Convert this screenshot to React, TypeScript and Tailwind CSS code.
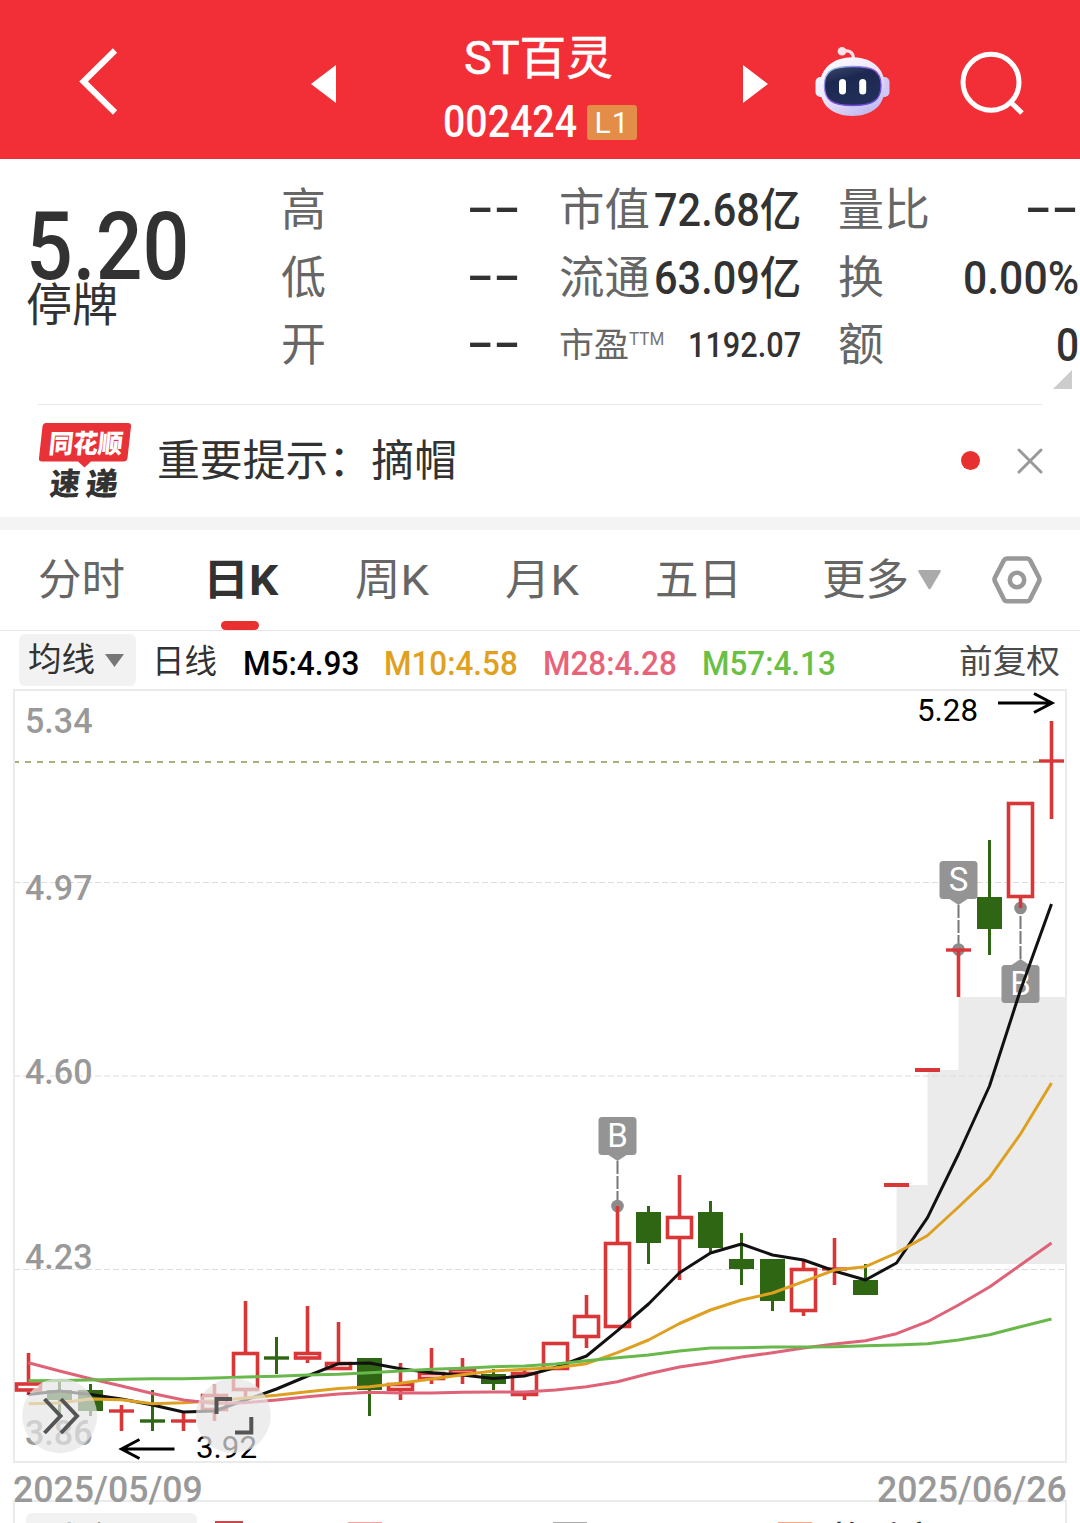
import { useLayoutEffect, useRef, useState, type ReactNode } from 'react';

/** Single-line text condensed or widened to fill the width of its box. */
function Fit({ className = '', children }: { className?: string; children: ReactNode }) {
  const box = useRef<HTMLDivElement>(null);
  const text = useRef<HTMLSpanElement>(null);
  const [ratio, setRatio] = useState(1);
  useLayoutEffect(() => {
    if (box.current && text.current) setRatio(box.current.clientWidth / text.current.offsetWidth);
  }, [children]);
  return (
    <div ref={box} className={`shrink-0 ${className}`}>
      <span ref={text} className="inline-block origin-left whitespace-nowrap" style={{ transform: `scaleX(${ratio})` }}>
        {children}
      </span>
    </div>
  );
}

function Robot() {
  return (
    <svg className="ml-[47px] h-[72px] w-[76px] shrink-0" viewBox="815 46 76 72">
      <defs>
        <linearGradient id="shell" x1="0" y1="0" x2="0.6" y2="1">
          <stop offset="0" stopColor="#fff" />
          <stop offset="0.55" stopColor="#ece6fb" />
          <stop offset="1" stopColor="#c3bdf0" />
        </linearGradient>
        <linearGradient id="rim" x1="0" y1="0" x2="1" y2="1">
          <stop offset="0" stopColor="#9adcf5" />
          <stop offset="0.5" stopColor="#8a4be0" />
          <stop offset="1" stopColor="#5b4fe0" />
        </linearGradient>
        <linearGradient id="visor" x1="0" y1="0" x2="0.4" y2="1">
          <stop offset="0" stopColor="#3d4a6e" />
          <stop offset="0.4" stopColor="#1c2850" />
          <stop offset="1" stopColor="#222f58" />
        </linearGradient>
      </defs>
      <rect x="815.500" y="77" width="12" height="20" rx="5" fill="#f2effd" />
      <rect x="877.500" y="77" width="12" height="20" rx="5" fill="#cfc9f5" />
      <path d="M843 51.500c7-2 10.500 1.500 10.500 8" fill="none" stroke="#f9dfe8" strokeWidth="3.200" />
      <circle cx="842" cy="51.300" r="4.300" fill="#fbe3ea" />
      <path d="M852.500 57.300c19 0 32.500 11 32.500 29 0 20-13.500 29.700-32.500 29.700s-32.700-9.700-32.700-29.700c0-18 13.700-29 32.700-29z" fill="url(#shell)" />
      <path d="M852.700 66.500c20 0 28.300 4 28.300 19s-8.300 20-28.300 20-28.300-5-28.300-20 8.300-19 28.300-19z" fill="url(#visor)" stroke="url(#rim)" strokeWidth="1.300" />
      <rect x="839" y="79" width="7" height="15.500" rx="3.500" fill="#fff" />
      <rect x="859.200" y="79" width="7" height="15.500" rx="3.500" fill="#fff" />
    </svg>
  );
}

function Header() {
  return (
    <header className="flex h-[159px] items-start bg-[#f22f37] pt-[46px] text-white">
      <svg className="ml-[76px] h-[72px] w-[44px] shrink-0" viewBox="76 46 44 72">
        <path d="M115 50.500 83.500 81.500 115 112.500" fill="none" stroke="#fff" strokeWidth="6" />
      </svg>
      <svg className="mt-[19px] ml-[191px] h-[38px] w-[25px] shrink-0" viewBox="0 0 25 38">
        <path d="M0 19 25 0v38z" fill="#fff" />
      </svg>
      <div className="-mt-[15px] ml-[107px] flex w-[194px] flex-col">
        <Fit className="ml-[21px] h-[55px] w-[149px] text-[46px] leading-[54px]">
          <span className="[-webkit-text-stroke:0.6px_white]">ST百灵</span>
        </Fit>
        <div className="mt-[9px] flex h-[54px] items-center">
          <Fit className="w-[134px] text-[44px] leading-[54px] font-medium">002424</Fit>
          <div className="ml-[10px] flex h-[35px] w-[50px] items-center justify-center rounded-[3px] bg-[#e38d48]">
            <span className="text-[30px] leading-[33px] tracking-[1px]">L1</span>
          </div>
        </div>
      </div>
      <svg className="mt-[19px] ml-[106px] h-[38px] w-[25px] shrink-0" viewBox="0 0 25 38">
        <path d="M25 19 0 0v38z" fill="#fff" />
      </svg>
      <Robot />
      <svg className="ml-[66px] h-[72px] w-[72px] shrink-0" viewBox="957 46 72 72">
        <circle cx="991" cy="82.300" r="28" fill="none" stroke="#fff" strokeWidth="5" />
        <path d="m1010.500 102 11.500 11" stroke="#fff" strokeWidth="5" />
      </svg>
    </header>
  );
}

const label = 'text-[#666] leading-[67px]';
const value = 'text-[#323232] font-medium leading-[67px]';
const dashes = 'text-[#323232] font-medium leading-[63px]';

function Quote() {
  return (
    <section className="relative flex h-[245px] pt-[18px]">
      <div className="w-[281px] pl-[26px] text-[#323232]">
        <Fit className="mt-[24px] h-[81px] w-[163px] text-[94px] leading-[92px] font-medium">5.20</Fit>
        <Fit className="w-[92px] text-[46px] leading-[46px]">停牌</Fit>
      </div>
      <div className="w-[239px]">
        {['高', '低', '开'].map((name) => (
          <div key={name} className="flex h-[67.500px] justify-between">
            <Fit className={`w-[45px] text-[45px] ${label}`}>{name}</Fit>
            <Fit className={`w-[53px] text-[46px] ${dashes}`}>--</Fit>
          </div>
        ))}
      </div>
      <div className="ml-[39px] w-[242px]">
        <div className="flex h-[67.500px] justify-between">
          <Fit className={`w-[91px] text-[45px] ${label}`}>市值</Fit>
          <Fit className={`w-[147px] text-[46px] ${value}`}>72.68亿</Fit>
        </div>
        <div className="flex h-[67.500px] justify-between">
          <Fit className={`w-[91px] text-[45px] ${label}`}>流通</Fit>
          <Fit className={`w-[147px] text-[46px] ${value}`}>63.09亿</Fit>
        </div>
        <div className="flex h-[67.500px]">
          <Fit className={`w-[70px] text-[34.500px] ${label}`}>市盈</Fit>
          <Fit className="mt-[12px] h-[30px] w-[35px] text-[18.500px] leading-[30px] text-[#777]">TTM</Fit>
          <Fit className={`ml-auto w-[113px] text-[35px] ${value}`}>1192.07</Fit>
        </div>
      </div>
      <div className="ml-[38px] w-[240px]">
        <div className="flex h-[67.500px] justify-between">
          <Fit className={`-ml-[1px] w-[92px] text-[45px] ${label}`}>量比</Fit>
          <Fit className={`mr-[1px] w-[53px] text-[46px] ${dashes}`}>--</Fit>
        </div>
        <div className="flex h-[67.500px] justify-between">
          <Fit className={`-ml-[1px] w-[46px] text-[45px] ${label}`}>换</Fit>
          <Fit className={`w-[116px] text-[46px] ${value}`}>0.00%</Fit>
        </div>
        <div className="flex h-[67.500px] justify-between">
          <Fit className={`-ml-[1px] w-[46px] text-[45px] ${label}`}>额</Fit>
          <Fit className={`w-[23px] text-[46px] ${value}`}>0</Fit>
        </div>
      </div>
      <svg className="absolute top-[211px] right-[8px] h-[19px] w-[19px]" viewBox="0 0 19 19">
        <path d="M19 0v19H0z" fill="#ccc" />
      </svg>
    </section>
  );
}

function Notice() {
  return (
    <section className="mx-[38px] flex h-[113px] items-center border-t border-[#e8e8e8]">
      <svg className="-mt-[2px] h-[84px] w-[94px] shrink-0" viewBox="38 418 94 84">
        <path d="M46 423h82q3.500 0 3 3.500l-3.500 31.500q-.5 3.500-4 3.500H91l-6.500 6-6.500-6H42q-3.500 0-3-3.500l3.500-31.500q.5-3.500 3.500-3.500z" fill="#e83237" />
        <text x="95.500" y="453" transform="skewX(-6)" className="text-[26px] font-black" fill="#fff" textLength="74" lengthAdjust="spacingAndGlyphs">同花顺</text>
        <text x="101" y="495" transform="skewX(-6)" className="text-[31px] font-black" fill="#333" textLength="30" lengthAdjust="spacingAndGlyphs">速</text>
        <text x="137" y="495" transform="skewX(-6)" className="text-[31px] font-black" fill="#333" textLength="32" lengthAdjust="spacingAndGlyphs">递</text>
      </svg>
      <Fit className="ml-[25px] w-[300px] text-[43px] leading-[60px] text-[#323232]">重要提示：摘帽</Fit>
      <div className="-mt-[1px] ml-auto h-[19px] w-[19px] rounded-full bg-[#e93030]" />
      <svg className="-mt-[1px] -mr-[1px] ml-[37px] h-[26px] w-[26px]" viewBox="0 0 26 26">
        <path d="M2 2 24 24M24 2 2 24" stroke="#999" strokeWidth="3" strokeLinecap="round" />
      </svg>
    </section>
  );
}

function Tabs() {
  return (
    <nav className="flex h-[101px] items-center border-b border-[#e6e6e6] text-[43px] leading-[60px] text-[#666]">
      <Fit className="ml-[38px] w-[87px]">分时</Fit>
      <div className="relative ml-[78px] flex h-full items-center font-bold text-[#323232]">
        <Fit className="w-[75px]">日K</Fit>
        <div className="absolute bottom-0 left-[18px] h-[9px] w-[38px] rounded-full bg-[#e93030]" />
      </div>
      <Fit className="ml-[77px] w-[74px]">周K</Fit>
      <Fit className="ml-[76px] w-[74px]">月K</Fit>
      <Fit className="ml-[76px] w-[87px]">五日</Fit>
      <Fit className="ml-[80px] w-[87px]">更多</Fit>
      <svg className="ml-[9px] h-[20px] w-[23px] shrink-0" viewBox="0 0 23 20">
        <path d="M1.500 0h20q2 0 1 2L13 18q-1.500 2.500-3 0L.5 2q-1-2 1-2z" fill="#aaa" />
      </svg>
      <svg className="ml-[49px] h-[52px] w-[54px] shrink-0" viewBox="990 554 54 52" fill="none" stroke="#999">
        <path d="M1007 558.500h20q2 0 3 1.700l9 17.300q1 2 0 4l-9 18q-1 1.800-3 1.800h-20q-2 0-3-1.800l-9-18q-1-2 0-4l9-17.300q1-1.700 3-1.700z" strokeWidth="4.600" />
        <circle cx="1017" cy="580" r="7.200" strokeWidth="4.600" />
      </svg>
    </nav>
  );
}

function Averages() {
  return (
    <div className="flex h-[57px] items-start pt-[3px] text-[34px] leading-[56px] font-medium">
      <div className="ml-[19px] flex h-[52px] w-[117px] items-center rounded-[6px] bg-[#f2f2f2] pl-[9px] font-normal text-[#323232]">
        <Fit className="w-[67px] text-[33px]">均线</Fit>
        <svg className="ml-[10px] h-[13px] w-[19px]" viewBox="0 0 19 13">
          <path d="M0 0h19L9.500 13z" fill="#777" />
        </svg>
      </div>
      <Fit className="ml-[16px] w-[65px] text-[33px] font-normal text-[#323232]">日线</Fit>
      <Fit className="mt-[1px] ml-[26px] w-[116px] text-black">M5:4.93</Fit>
      <Fit className="mt-[1px] ml-[25px] w-[134px] text-[#e0a020]">M10:4.58</Fit>
      <Fit className="mt-[1px] ml-[25px] w-[134px] text-[#e8637a]">M28:4.28</Fit>
      <Fit className="mt-[1px] ml-[25px] w-[134px] text-[#6abf45]">M57:4.13</Fit>
      <Fit className="mr-[20px] ml-auto w-[101px] text-[33px] font-normal text-[#4a4a4a]">前复权</Fit>
    </div>
  );
}

type Candle = { up: boolean; wick?: [number, number]; body: [number, number] };
const r = (body: [number, number], wick?: [number, number]): Candle => ({ up: true, body, wick });
const g = (body: [number, number], wick?: [number, number]): Candle => ({ up: false, body, wick });

const candles: Candle[] = [
  r([1382.5, 1391.5], [1353, 1395]), g([1390, 1400], [1379, 1413]), g([1390, 1411], [1384, 1416]),
  r([1411, 1411], [1405, 1431]), g([1421, 1421], [1390, 1431]), r([1421, 1421], [1412, 1431]),
  r([1394, 1411], [1384, 1421]), r([1352, 1391], [1301, 1397]), g([1358, 1358], [1337, 1374]),
  r([1352, 1359.5], [1306, 1363]), r([1362, 1370], [1322, 1370]), g([1358, 1390], [1358, 1416]),
  r([1383, 1391], [1363, 1400]), r([1372, 1380], [1348, 1384]), r([1368, 1375], [1358, 1384]),
  g([1374, 1384], [1369, 1390]), r([1372, 1396], [1370, 1400]), r([1342, 1370]),
  r([1315, 1338], [1295, 1348]), r([1242, 1328], [1206, 1242]), g([1212, 1243], [1206, 1264]),
  r([1216, 1239], [1175, 1280]), g([1212, 1248], [1201, 1252]), g([1259, 1269], [1233, 1285]),
  g([1259, 1301], [1259, 1311]), r([1268, 1312], [1261, 1316]), r([1269, 1269], [1238, 1285]),
  g([1280, 1295], [1264, 1280]), r([1185, 1185]), r([1070, 1070]), r([950, 950], [950, 997]),
  g([897, 929], [840, 955]), r([802, 898], [898, 908]), r([761, 761], [721, 819]),
];

const m5 = [1394.5, 1391, 1394.5, 1399, 1405, 1412, 1411, 1400, 1389, 1376, 1363.7, 1363, 1368.7, 1372.7, 1375, 1378.5, 1376, 1367.5, 1356, 1330.7, 1304, 1272.7, 1253, 1244, 1255, 1260, 1271, 1280, 1263, 1217.7, 1154, 1086, 990, 904];
const m10 = [1403.7, 1403, 1399, 1399.7, 1403.7, 1402.7, 1400.7, 1398, 1395.3, 1391.7, 1388.5, 1386.7, 1383.3, 1379, 1374.7, 1371, 1369.3, 1367.7, 1363.7, 1352.7, 1340, 1323.5, 1310, 1300, 1293, 1281.7, 1270, 1266.7, 1253, 1235.5, 1207, 1177.7, 1134, 1083];
const m28 = [1362.7, 1371, 1378.7, 1386, 1393.5, 1400, 1403.5, 1402.7, 1400, 1396.7, 1394, 1392.3, 1393, 1393, 1392.3, 1392, 1392, 1390, 1386.7, 1381.7, 1373.7, 1367, 1362.5, 1357, 1352.7, 1348, 1344, 1340.7, 1333.7, 1321.7, 1305, 1287, 1265, 1243];
const m57 = [1380.7, 1380.5, 1380, 1379.3, 1378.7, 1378.7, 1378, 1377, 1376.3, 1375, 1374.3, 1372.7, 1371, 1369.3, 1368.3, 1366.7, 1366, 1364, 1360.7, 1357.7, 1355, 1351, 1348, 1347.7, 1347, 1347, 1346.7, 1345.7, 1345, 1343.7, 1340, 1334.7, 1326.7, 1319];

const xAt = (i: number) => 28.5 + 31 * i;
const line = (ys: number[]) => ys.map((y, i) => `${xAt(i)},${y}`).join(' ');

function CandleMark({ c, x }: { c: Candle; x: number }) {
  const color = c.up ? '#d93638' : '#2f6614';
  const [top, bottom] = c.body;
  const flat = top === bottom;
  const hollow = c.up && !flat;
  return (
    <g stroke={color} strokeWidth={c.up ? 3.6 : 3}>
      {c.wick && (!hollow || c.wick[0] < top) && <path d={`M${x} ${c.wick[0]}V${hollow ? top : c.wick[1]}`} />}
      {c.wick && hollow && c.wick[1] > bottom && <path d={`M${x} ${bottom}V${c.wick[1]}`} />}
      {flat && <path d={`M${x - 12.5} ${top}h25`} strokeWidth={c.wick ? 3.4 : 4} />}
      {hollow && <rect x={x - 12} y={top + 1.5} width="24" height={bottom - top - 3} fill="none" />}
      {!flat && !c.up && <rect x={x - 12.5} y={top} width="25" height={bottom - top} fill={color} stroke="none" />}
    </g>
  );
}

function Marker({ x, box, dot, tip, name }: { x: number; box: number; dot: number; tip: number; name: string }) {
  const below = box > dot;
  const base = below ? box : box + 38;
  return (
    <g>
      <path d={`M${x} ${tip}V${dot}`} stroke="#777" strokeWidth="2" strokeDasharray="13 2" />
      <circle cx={x} cy={dot} r="6.300" fill="#8c8c8c" />
      <rect x={x - 19} y={box} width="38" height="38" rx="3.500" fill="#949494" />
      <path d={`M${x - 9} ${base}L${x} ${tip}L${x + 9} ${base}z`} fill="#949494" />
      <text x={x} y={box + 30} textAnchor="middle" fill="#fff" className="text-[33px]">{name}</text>
    </g>
  );
}

const axis: [string, number][] = [['5.34', 733], ['4.97', 900], ['4.60', 1084], ['4.23', 1269], ['3.86', 1445]];

function Chart() {
  return (
    <svg className="block h-[776px] w-[1080px]" viewBox="0 688 1080 776" fill="none">
      <path d="M896.500 1264V1185h31V1070h31V997H1066V1264z" fill="#ebebeb" />
      <path d="M14 882.500H1066M14 1076H1066M14 1269.500H1066" stroke="#dcdcdc" strokeWidth="1" strokeDasharray="6 3" />
      <path d="M13 762H1040" stroke="#aab078" strokeWidth="2" strokeDasharray="6 6" />
      <rect x="14" y="690" width="1052" height="772" stroke="#ebebeb" strokeWidth="2" />
      {axis.map(([t, y]) => (
        <text key={t} x="25" y={y} fill="#999" className="text-[35px] font-medium" textLength="67.500" lengthAdjust="spacingAndGlyphs">{t}</text>
      ))}
      <Marker x={617.5} box={1117} dot={1206} tip={1161} name="B" />
      <Marker x={958.5} box={861} dot={949.5} tip={905} name="S" />
      <Marker x={1020.5} box={965} dot={908} tip={959} name="B" />
      {candles.map((c, i) => <CandleMark key={i} c={c} x={xAt(i)} />)}
      <g strokeWidth="3" strokeLinejoin="round">
        <polyline points={line(m5)} stroke="#111" />
        <polyline points={line(m10)} stroke="#dda020" />
        <polyline points={line(m28)} stroke="#de6378" />
        <polyline points={line(m57)} stroke="#69b84c" />
      </g>
      <g stroke="#000" strokeWidth="3">
        <path d="M998 703H1052M1034 693.500 1052 703 1034 712.500" />
        <path d="M174.500 1449H121M139.500 1439.500 121.500 1449 139.500 1458.500" />
      </g>
      <g fill="#000" className="text-[32px]">
        <text x="917" y="721" textLength="61" lengthAdjust="spacingAndGlyphs">5.28</text>
        <text x="196" y="1458" textLength="61" lengthAdjust="spacingAndGlyphs">3.92</text>
      </g>
      <g fill="#e6e6e6" fillOpacity="0.7">
        <circle cx="59.700" cy="1415.700" r="37.500" />
        <circle cx="233.300" cy="1415.700" r="37.500" />
      </g>
      <g stroke="#555" strokeWidth="4">
        <path d="M44.500 1399 60.500 1416 44.500 1433M61 1399 77 1416 61 1433" />
        <path d="M216.500 1414V1399H232M251.300 1417V1432.500H235" />
      </g>
    </svg>
  );
}

function VolumePanel() {
  return (
    <div className="mx-[13px] flex h-[23px] items-start overflow-hidden border-x-2 border-t-2 border-[#ebebeb]">
      <div className="mt-[11px] ml-[11px] h-[52px] w-[171px] shrink-0 rounded-[6px] bg-[#f2f2f2] pl-[24px] text-[#323232]">
        <Fit className="w-[99px] text-[33px] leading-[54px] font-medium">成交量</Fit>
      </div>
      <div className="mt-[19px] ml-[18px] h-[20px] w-[28px] shrink-0 bg-[#c9484a]" />
      <div className="mt-[20px] ml-[105px] h-[20px] w-[34px] shrink-0 bg-[#f4a3a3]" />
      <div className="mt-[20px] ml-[171px] h-[20px] w-[34px] shrink-0 bg-[#aaa]" />
      <div className="mt-[20px] ml-[191px] h-[20px] w-[34px] shrink-0 bg-[#f4aa80]" />
      <Fit className="mt-[11px] ml-[20px] w-[105px] text-[34px] leading-[52px] font-medium text-[#323232]">换手率</Fit>
    </div>
  );
}

export default function App() {
  return (
    <main className="h-[1523px] w-[1080px] overflow-hidden bg-white font-[Roboto,'Noto_Sans_CJK_SC',sans-serif]">
      <Header />
      <Quote />
      <Notice />
      <div className="h-[13px] bg-[#f4f4f4]" />
      <Tabs />
      <Averages />
      <Chart />
      <div className="flex h-[36px] justify-between px-[13px] text-[37.500px] leading-[51px] font-medium text-[#999]">
        <Fit className="w-[190px]">2025/05/09</Fit>
        <Fit className="w-[190px]">2025/06/26</Fit>
      </div>
      <VolumePanel />
    </main>
  );
}
